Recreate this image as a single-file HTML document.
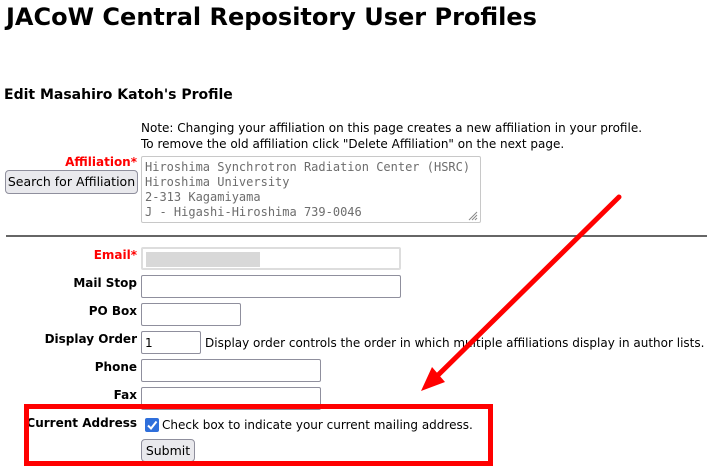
<!DOCTYPE html>
<html><head><style>
body{margin:0;width:718px;height:469px;background:#fff;font-family:"DejaVu Sans",Verdana,sans-serif;font-size:12px;color:#000;position:relative;overflow:hidden}
.a{position:absolute;white-space:nowrap}
.l{position:absolute;right:581px;font-weight:bold;text-align:right;white-space:nowrap}
.in{position:absolute;border:1px solid #8f8f9d;border-radius:2px;box-sizing:border-box;background:#fff}
.btn{position:absolute;border:1px solid #8f8f9d;border-radius:4px;background:#e9e9ed;box-sizing:border-box;text-align:center;white-space:nowrap}
</style></head><body>
<div class="a" style="left:6px;top:0px;font-size:24px;font-weight:bold;line-height:34px">JACoW Central Repository User Profiles</div>
<div class="a" style="left:4px;top:86px;font-size:14px;font-weight:bold;line-height:18px">Edit Masahiro Katoh's Profile</div>
<div class="a" style="left:141px;top:120px;line-height:16px">Note: Changing your affiliation on this page creates a new affiliation in your profile.<br>To remove the old affiliation click "Delete Affiliation" on the next page.</div>
<div class="l" style="top:155px;color:#f00">Affiliation*</div>
<div class="btn" style="left:5px;top:170px;width:133px;height:24px;line-height:22px;font-size:12.5px">Search for Affiliation</div>
<div class="in" style="left:141px;top:156px;width:340px;height:67px;border-color:#c8c8c8;font-family:'DejaVu Sans Mono',monospace;font-size:12px;color:#6d6d6d;line-height:15px;padding:3px 3px;white-space:pre">Hiroshima Synchrotron Radiation Center (HSRC)
Hiroshima University
2-313 Kagamiyama
J - Higashi-Hiroshima 739-0046</div>
<svg class="a" style="left:468px;top:211px" width="10" height="10"><path d="M9 1L1 9M9 4L4 9M9 7L7 9" stroke="#888" stroke-width="1"/></svg>
<div class="a" style="left:6px;top:235px;width:701px;height:2px;background:#666"></div>
<div class="l" style="top:248px;color:#f00">Email*</div>
<div class="in" style="left:141px;top:247px;width:260px;height:23px;border:2px solid #ddd"><div style="position:absolute;left:3px;top:3px;width:114px;height:15px;background:#d8d8d8"></div></div>
<div class="l" style="top:276px">Mail Stop</div>
<div class="in" style="left:141px;top:275px;width:260px;height:23px"></div>
<div class="l" style="top:304px">PO Box</div>
<div class="in" style="left:141px;top:303px;width:100px;height:23px"></div>
<div class="l" style="top:332px">Display Order</div>
<div class="in" style="left:141px;top:331px;width:60px;height:23px;padding:4px 3px;line-height:15px">1</div>
<div class="a" style="left:205px;top:336px">Display order controls the order in which multiple affiliations display in author lists.</div>
<div class="l" style="top:360px">Phone</div>
<div class="in" style="left:141px;top:359px;width:180px;height:23px"></div>
<div class="l" style="top:388px">Fax</div>
<div class="in" style="left:141px;top:387px;width:180px;height:23px"></div>
<div class="l" style="top:416px">Current Address</div>
<div class="a" style="left:145px;top:418px;width:14px;height:14px;background:#2f6fdb;border-radius:2px"><svg width="14" height="14"><path d="M3 7.5L6 10.5L11.5 3.5" stroke="#fff" stroke-width="2" fill="none"/></svg></div>
<div class="a" style="left:162px;top:418px">Check box to indicate your current mailing address.</div>
<div class="btn" style="left:141px;top:439px;width:54px;height:23px;line-height:21px;font-size:12.5px">Submit</div>
<div class="a" style="left:24px;top:404px;width:469px;height:62px;border:5px solid #f00;box-sizing:border-box"></div>
<svg class="a" style="left:0;top:0" width="718" height="469"><path d="M619 197L432 381" stroke="#f00" stroke-width="5" stroke-linecap="round"/><path d="M421 391L432 367L445 382Z" fill="#f00"/></svg>
</body></html>
